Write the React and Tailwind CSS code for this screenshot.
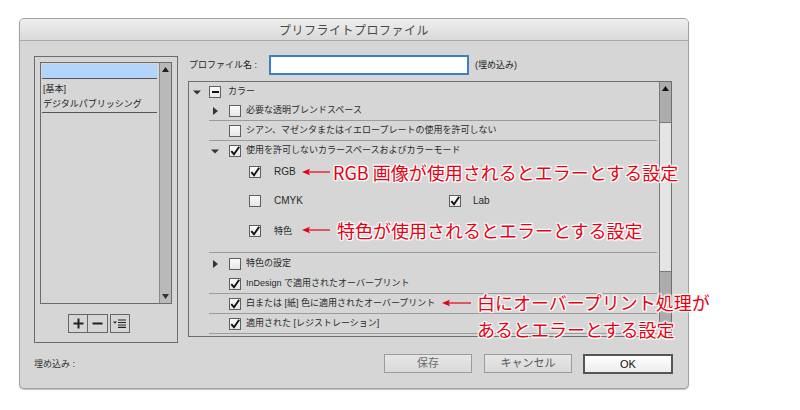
import React from "react";

const UI = "[font-family:'Liberation_Sans','Noto_Sans_CJK_JP',sans-serif]";
const JP = "[font-family:'Noto_Sans_CJK_JP','Liberation_Sans',sans-serif]";

function Check({ state = "off", size = 12 }) {
  return (
    <div
      className="flex shrink-0 items-center justify-center border border-[#5f5f5f] bg-gradient-to-b from-[#fbfbfb] to-[#e6e6e6]"
      style={{ width: size, height: size }}
    >
      {state === "on" && (
        <svg width="10" height="10" viewBox="0 0 10 10">
          <path d="M1.3 5.2 L4 8.2 L9.2 0.8" fill="none" stroke="#111" strokeWidth="1.9" />
        </svg>
      )}
      {state === "mixed" && <div className="h-[2px] w-[7px] bg-[#111]" />}
    </div>
  );
}

function TriRight() {
  return (
    <svg width="8" height="10" viewBox="0 0 8 10" className="shrink-0">
      <path d="M2 1 L7 5 L2 9 Z" fill="#333" />
    </svg>
  );
}
function TriDown() {
  return (
    <svg width="10" height="8" viewBox="0 0 10 8" className="shrink-0">
      <path d="M1 2.5 L9 2.5 L5 6.5 Z" fill="#333" />
    </svg>
  );
}

function Sep() {
  return <div className="ml-[20px] mr-[2px] h-px shrink-0 bg-[#9b9b9b]" />;
}

function L1({ tri, state, text, h = 19 }) {
  return (
    <div className="flex shrink-0 items-center pl-[21px]" style={{ height: h }}>
      <div className="flex w-[10px] justify-center">
        {tri === "right" && <TriRight />}
        {tri === "down" && <TriDown />}
      </div>
      <div className="ml-[9px]">
        <Check state={state} />
      </div>
      <span className="ml-[5px] text-[9px] leading-none text-[#2a2a2a]">{text}</span>
    </div>
  );
}

function L2({ state, text, h, extra, latin }) {
  return (
    <div className="flex shrink-0 items-center pl-[60px]" style={{ height: h }}>
      <Check state={state} />
      <span className={`ml-[13px] w-[175px] leading-none text-[#2a2a2a] ${latin ? "text-[10px]" : "text-[9px]"}`}>{text}</span>
      {extra}
    </div>
  );
}

function Arrow({ w = 28 }) {
  return (
    <svg width={w} height="8" viewBox={`0 0 ${w} 8`} className="shrink-0">
      <path d={`M6 4 L${w} 4`} stroke="#e60012" strokeWidth="1.2" />
      <path d="M0 4 L8 0.8 L6.5 4 L8 7.2 Z" fill="#e60012" />
    </svg>
  );
}

const note =
  "text-[18px] leading-none text-[#e60012] whitespace-nowrap [text-shadow:-1px_-1px_0_#fff,1px_-1px_0_#fff,-1px_1px_0_#fff,1px_1px_0_#fff,0_0_3px_#fff,0_0_3px_#fff] " +
  JP;

export default function App() {
  return (
    <div className={`relative h-[410px] w-[800px] bg-white pl-[19px] pt-[18px] ${UI}`}>
      <div className="flex h-[371px] w-[670px] flex-col overflow-hidden rounded-[5px] border border-[#a3a3a3] bg-[#d6d6d6] shadow-[0_1px_1px_rgba(0,0,0,0.25)]">
        {/* title bar */}
        <div className="flex h-[22px] shrink-0 items-center justify-center border-b border-[#a9a9a9] bg-gradient-to-b from-[#efefef] to-[#d9d9d9]">
          <span className={`text-[12px] tracking-[0.5px] text-[#4a4a4a] ${JP}`}>プリフライトプロファイル</span>
        </div>

        {/* body */}
        <div className="flex flex-col pl-[14px] pr-[15px] pt-[14px]">
          <div className="flex items-start">
            {/* left box */}
            <div className="mt-[1px] flex h-[287px] w-[144px] flex-col border border-[#6c6c6c] p-[5px]">
              <div className="flex h-[242px] border border-[#6c6c6c]">
                <div className="flex flex-1 flex-col pl-[1px] pr-[2px] pt-px">
                  <div className="h-[14px] bg-[#b4d5fb]" />
                  <div className="h-px bg-[#555]" />
                  <div className="flex h-[18px] items-center pl-[1px] pt-[3px] text-[9px] leading-none text-[#222]">[基本]</div>
                  <div className="flex h-[15px] items-center pl-[1px] text-[9px] leading-none text-[#222]">デジタルパブリッシング</div>
                  <div className="h-px bg-[#555]" />
                </div>
                <div className="flex w-[12px] flex-col items-center justify-between border-l border-[#8a8a8a] bg-[#b9b9b9] py-[4px]">
                  <svg width="7" height="5" viewBox="0 0 7 5"><path d="M0 5 L3.5 0 L7 5 Z" fill="#222" /></svg>
                  <svg width="7" height="5" viewBox="0 0 7 5"><path d="M0 0 L7 0 L3.5 5 Z" fill="#333" /></svg>
                </div>
              </div>
              <div className="mt-[10px] flex pl-[28px]">
                <div className="flex h-[19px] border border-[#666]">
                  <div className="flex w-[19px] items-center justify-center border-r border-[#666]">
                    <svg width="11" height="11" viewBox="0 0 11 11"><path d="M5.5 0.5 V10.5 M0.5 5.5 H10.5" stroke="#222" strokeWidth="2" /></svg>
                  </div>
                  <div className="flex w-[19px] items-center justify-center">
                    <svg width="11" height="11" viewBox="0 0 11 11"><path d="M0.5 5.5 H10.5" stroke="#222" strokeWidth="2" /></svg>
                  </div>
                </div>
                <div className="ml-[2px] flex h-[19px] w-[20px] items-center justify-center border border-[#666]">
                  <svg width="14" height="9" viewBox="0 0 14 9">
                    <path d="M0 2.5 L4 2.5 L2 4.8 Z" fill="#222" />
                    <path d="M5 1 H13 M5 3.5 H13 M5 6 H13 M5 8.3 H13" stroke="#222" strokeWidth="1.2" />
                  </svg>
                </div>
              </div>
            </div>

            {/* right column */}
            <div className="ml-[10px] flex w-[484px] flex-col">
              <div className="flex h-[20px] items-center">
                <span className="w-[81px] pl-[1px] text-[9px] leading-none text-[#222]">プロファイル名 :</span>
                <div className="h-[20px] w-[200px] border-2 border-[#3c7fc6] bg-white" />
                <span className="ml-[6px] text-[9px] leading-none text-[#222]">(埋め込み)</span>
              </div>

              <div className="mt-[6px] flex h-[256px] border border-[#6e6e6e]">
                <div className="flex flex-1 flex-col">
                  <div className="flex h-[19px] shrink-0 items-center pl-[3px]">
                    <div className="flex w-[10px] justify-center"><TriDown /></div>
                    <div className="ml-[7px]"><Check state="mixed" size={12} /></div>
                    <span className="ml-[7px] text-[9px] leading-none text-[#2a2a2a]">カラー</span>
                  </div>
                  <L1 tri="right" state="off" text="必要な透明ブレンドスペース" />
                  <Sep />
                  <L1 state="off" text="シアン、マゼンタまたはイエロープレートの使用を許可しない" />
                  <Sep />
                  <L1 tri="down" state="on" text="使用を許可しないカラースペースおよびカラーモード" />
                  <L2 state="on" text="RGB" h={24} latin />
                  <L2
                    state="off"
                    text="CMYK"
                    h={34}
                    latin
                    extra={
                      <>
                        <Check state="on" />
                        <span className="ml-[12px] text-[10px] leading-none text-[#2a2a2a]">Lab</span>
                      </>
                    }
                  />
                  <L2 state="on" text="特色" h={26} />
                  <div className="h-[8px] shrink-0" />
                  <Sep />
                  <L1 tri="right" state="off" text="特色の設定" h={21} />
                  <L1 state="on" text="InDesign で適用されたオーバープリント" />
                  <Sep />
                  <L1 state="on" text="白または [紙] 色に適用されたオーバープリント" />
                  <Sep />
                  <L1 state="on" text="適用された [レジストレーション]" />
                  <Sep />
                </div>
                <div className="flex w-[12px] flex-col border-l border-[#7a7a7a]">
                  <div className="flex h-[41px] flex-col items-center border-b border-[#7a7a7a] bg-[#acacac] pt-[4px]">
                    <svg width="7" height="5" viewBox="0 0 7 5"><path d="M0 5 L3.5 0 L7 5 Z" fill="#111" /></svg>
                  </div>
                  <div className="h-[148px] bg-[#e4e4e4]" />
                  <div className="flex-1 border-t border-[#7a7a7a] bg-[#acacac]" />
                </div>
              </div>
            </div>
          </div>

          {/* bottom row */}
          <div className="mt-[11px] flex h-[20px] items-center">
            <span className="text-[9px] leading-none text-[#333]">埋め込み :</span>
            <div className="ml-auto flex">
              <div className="flex h-[19px] w-[88px] items-center justify-center border border-[#9c9c9c] bg-gradient-to-b from-[#e6e6e6] to-[#dadada] text-[11px] text-[#6a6a6a]">保存</div>
              <div className="ml-[12px] flex h-[19px] w-[88px] items-center justify-center border border-[#9c9c9c] bg-gradient-to-b from-[#e6e6e6] to-[#dadada] text-[11px] text-[#555]">キャンセル</div>
              <div className="ml-[11px] flex h-[20px] w-[90px] items-center justify-center border-2 border-[#555] bg-gradient-to-b from-[#ffffff] to-[#ececec] text-[11px] text-[#111]">OK</div>
            </div>
          </div>
        </div>
      </div>

      {/* annotations */}
      <div className="absolute left-[302px] top-[162px] flex h-[20px] items-center">
        <Arrow w={28} />
        <span className={`ml-[3px] ${note}`}>RGB 画像が使用されるとエラーとする設定</span>
      </div>
      <div className="absolute left-[302px] top-[220px] flex h-[20px] items-center">
        <Arrow w={28} />
        <span className={`ml-[7px] ${note}`}>特色が使用されるとエラーとする設定</span>
      </div>
      <div className="absolute left-[442px] top-[293px] flex h-[20px] items-center">
        <Arrow w={29} />
        <span className={`ml-[6px] -mt-[3px] ${note}`}>白にオーバープリント処理が</span>
      </div>
      <div className={`absolute left-[477px] top-[320px] ${note}`}>あるとエラーとする設定</div>
    </div>
  );
}
